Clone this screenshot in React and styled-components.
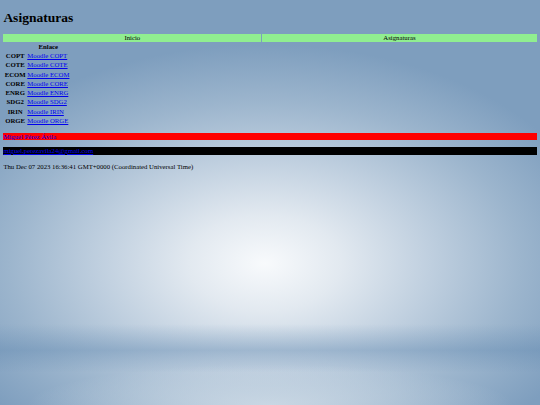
import React from "react";
import styled, { createGlobalStyle } from "styled-components";

const GlobalStyle = createGlobalStyle`
  html {
    min-height: 100%;
    background-color: #7c9dbd;
    background-image:
      radial-gradient(ellipse 45% 10% at 50% 100%, rgba(214, 225, 234, 0.7) 0%, rgba(214, 225, 234, 0) 100%),
      linear-gradient(to bottom, rgba(90, 130, 170, 0) 80%, rgba(95, 135, 175, 0.4) 86.5%, rgba(90, 130, 170, 0) 92%),
      radial-gradient(ellipse 64% 54% at 49% 65%, #f8fafc 0%, #e2e9f0 22%, #bfcfdf 48%, #9cb5cd 74%, #7e9ebe 100%);
    background-repeat: no-repeat;
    background-size: 100% 100%;
  }
  body {
    margin: 3.375px;
    font-family: "Liberation Serif", "Times New Roman", serif;
    font-size: 6.75px;
    line-height: 7.65px;
    color: #000;
  }
`;

const Title = styled.h1`
  font-size: 13.5px;
  line-height: 15.5px;
  font-weight: bold;
  margin: 6.5px 0 8.5px;
`;

const Nav = styled.nav`
  display: flex;
  gap: 1px;
`;

const NavItem = styled.div`
  flex: 1 1 auto;
  background: #90ee90;
  text-align: center;
  color: #000;
`;

const CourseTable = styled.table`
  border-spacing: 1px;
  font-size: 6.75px;
  line-height: 7.65px;
`;

const HeadCell = styled.th`
  padding: 0.3px;
  text-align: center;
  font-weight: bold;
`;

const RowHead = styled.th`
  padding: 0.3px;
  text-align: center;
  font-weight: bold;
`;

const Cell = styled.td`
  padding: 0.3px;
`;

const CourseLink = styled.a`
  color: #0000ee;
  text-decoration: underline;
`;

const Bar = styled.p`
  margin: 6.75px 0;
  background: ${(p) => p.$bg};
  color: ${(p) => p.$fg};
`;

const EmailLink = styled.a`
  color: #0000ee;
  text-decoration: underline;
`;

const DateLine = styled.p`
  margin: 8px 0;
`;

const courses = ["COPT", "COTE", "ECOM", "CORE", "ENRG", "SDG2", "IRIN", "ORGE"];

export default function App() {
  return (
    <>
      <GlobalStyle />
      <Title>Asignaturas</Title>
      <Nav>
        <NavItem>Inicio</NavItem>
        <NavItem>Asignaturas</NavItem>
      </Nav>
      <CourseTable>
        <thead>
          <tr>
            <HeadCell></HeadCell>
            <HeadCell>Enlace</HeadCell>
          </tr>
        </thead>
        <tbody>
          {courses.map((c) => (
            <tr key={c}>
              <RowHead>{c}</RowHead>
              <Cell>
                <CourseLink href="#">Moodle {c}</CourseLink>
              </Cell>
            </tr>
          ))}
        </tbody>
      </CourseTable>
      <Bar $bg="#ff0000" $fg="#0000ee">Miguel Pérez Ávila</Bar>
      <Bar $bg="#000000" $fg="#0000ee">
        <EmailLink href="#">miguel.perezavila24@gmail.com</EmailLink>
      </Bar>
      <DateLine>Thu Dec 07 2023 16:36:41 GMT+0000 (Coordinated Universal Time)</DateLine>
    </>
  );
}
